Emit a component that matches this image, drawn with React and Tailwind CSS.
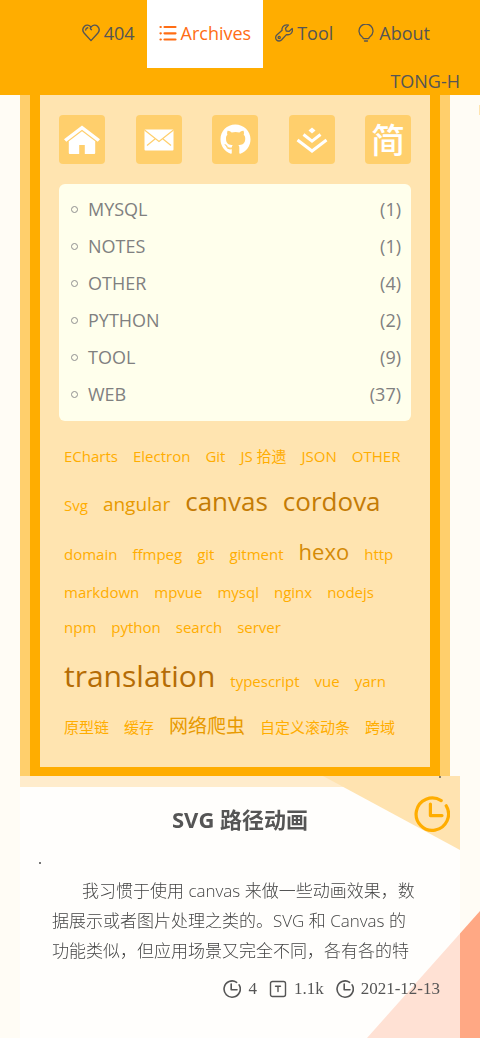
import React from "react";
import { FaGithub } from "react-icons/fa";

const line = {
  fill: "none",
  stroke: "currentColor",
  strokeLinecap: "round",
  strokeLinejoin: "round",
};

const HeartIcon = () => (
  <svg viewBox="0 0 18 18" className="size-[18px]" {...line} strokeWidth="1.4">
    <path d="M9 3.2C7.200.8 4.300.5 2.500 2.200.5 4.200.4 7 2.300 9.200L9 16.600l6.700-7.400c1.900-2.200 1.800-5-.2-7C13.700.5 10.800.8 9 3.200c-1 1-.7 1.900.4 2.500" />
    <path d="M3.700 6c.1-1.200.9-2 2-2.200" />
  </svg>
);

const ListIcon = () => (
  <svg viewBox="0 0 18 18" className="size-[18px]" {...line} strokeWidth="2.2">
    <path d="M5.500 3h11M5.500 9.300h11M5.500 15.500h11" />
    <path d="M1.500 3h.3M1.500 9.300h.3M1.500 15.500h.3" />
  </svg>
);

const WrenchIcon = () => (
  <svg viewBox="0 0 18 18" className="size-[18px]" {...line} strokeWidth="1.3">
    <path d="M13.400 1.100C10.800.2 7.800 1.600 7.100 4.300c-.2.800-.1 1.300 0 1.900L1.800 11c-1.500 1.400-1.500 3.700-.2 5 1.400 1.400 3.700 1.300 5.100-.2l4.700-5.200c2.900.6 5.400-1.100 6-3.700.2-.9.100-1.600-.2-2.400l-3.200 2.900-2.800-.4-.7-2.700z" />
    <circle cx="4.200" cy="13.500" r="1.100" />
  </svg>
);

const BulbIcon = () => (
  <svg viewBox="0 0 18 18" className="size-[18px]" {...line} strokeWidth="1.3">
    <path d="M6.200 14.600c0-.9-.7-1.500-1.500-2.100A7 7 0 1 1 13.300 12.500c-.8.6-1.500 1.200-1.500 2.100zM7.500 17h3" />
  </svg>
);

const ClockIcon = ({ className }) => (
  <svg viewBox="0 0 18 18" className={className} {...line} strokeWidth="1.6">
    <path d="M16.100 4.900A8.100 8.100 0 1 1 13.600 2.300" />
    <path d="M8.200 4v5.800h5.800" />
  </svg>
);

const WordsIcon = () => (
  <svg viewBox="0 0 18 18" className="size-[18px]" {...line} strokeWidth="1.4">
    <rect x="1.500" y="1.500" width="15" height="15" rx="2" />
    <path d="M6.500 6.300h5M9 6.300v5.200" />
  </svg>
);

const HomeIcon = () => (
  <svg viewBox="0 0 36 30" className="h-[30px] w-9" fill="currentColor">
    <path d="M18 .5 0 14.200l2.300 2.500L18 4.800l15.700 11.900 2.300-2.500z" />
    <path d="M18 6.200 4.800 16.200V28q0 1 1 1h9.400v-9h5.600v9h9.400q1 0 1-1V16.200z" />
  </svg>
);

const MailIcon = () => (
  <svg viewBox="0 0 30 22" className="h-[22px] w-[30px]">
    <rect x=".5" y=".5" width="29" height="21" rx="1" fill="currentColor" />
    <path d="M.5 1 15 12.500 29.500 1M3 16.500 11 10M27 16.500 19 10" fill="none" stroke="#ffcf6c" strokeWidth="1.2" />
  </svg>
);

const JuejinIcon = () => (
  <svg viewBox="0 0 32 26" className="h-[26px] w-8">
    <path d="M16 .5 19.500 3.500 16 6.500 12.500 3.500z" fill="currentColor" />
    <path d="M7.500 7.500 16 14.200 24.500 7.500M1.500 13 16 24l14.500-11" fill="none" stroke="currentColor" strokeWidth="3" />
  </svg>
);

const nav = [
  { label: "404", icon: <HeartIcon /> },
  { label: "Archives", icon: <ListIcon />, active: true },
  { label: "Tool", icon: <WrenchIcon /> },
  { label: "About", icon: <BulbIcon /> },
];

const socials = [
  { label: "Home", icon: <HomeIcon /> },
  { label: "Mail", icon: <MailIcon /> },
  { label: "GitHub", icon: <FaGithub className="size-[31px]" /> },
  { label: "Juejin", icon: <JuejinIcon /> },
  { label: "Jianshu", icon: <span className="text-[34px] leading-9 font-medium">简</span> },
];

const categories = [
  ["MYSQL", 1],
  ["NOTES", 1],
  ["OTHER", 4],
  ["PYTHON", 2],
  ["TOOL", 9],
  ["WEB", 37],
];

const sizes = {
  1: "text-[15px] leading-[35px] text-[#ffad00]",
  2: "text-[19px] leading-[40px] text-[#e89a00]",
  3: "text-[22px] leading-[47px] text-[#d48a06]",
  4: "text-[26px] leading-[54px] text-[#c47b05]",
  5: "text-[30px] leading-[61px] text-[#b56c05]",
};

const tags = [
  ["ECharts", 1], ["Electron", 1], ["Git", 1], ["JS 拾遗", 1], ["JSON", 1], ["OTHER", 1],
  ["Svg", 1], ["angular", 2], ["canvas", 4], ["cordova", 4],
  ["domain", 1], ["ffmpeg", 1], ["git", 1], ["gitment", 1], ["hexo", 3], ["http", 1],
  ["markdown", 1], ["mpvue", 1], ["mysql", 1], ["nginx", 1], ["nodejs", 1],
  ["npm", 1], ["python", 1], ["search", 1], ["server", 1],
  ["translation", 5], ["typescript", 1], ["vue", 1], ["yarn", 1],
  ["原型链", 1], ["缓存", 1], ["网络爬虫", 2], ["自定义滚动条", 1], ["跨域", 1],
];

function Header() {
  return (
    <header className="h-[95px] bg-[#ffad00] text-[18px] text-[#555]">
      <nav className="flex justify-end pr-[38px]">
        {nav.map((item) => (
          <a
            key={item.label}
            href="#"
            className={
              item.active
                ? "flex h-17 items-center gap-1 bg-white px-3 pb-0.5 text-[#ff6d14]"
                : "flex h-17 items-center gap-1 px-3 pb-0.5"
            }
          >
            {item.icon}
            {item.label}
          </a>
        ))}
      </nav>
      <div className="pr-5 text-right leading-[26px]">TONG-H</div>
    </header>
  );
}

function Sidebar() {
  return (
    <aside className="mr-[30px] ml-5 border-x-10 border-[#ffcf6c]">
      <div className="border-x-10 border-b-9 border-[#ffad00] bg-[#ffe4b0] px-[19px] pt-5 pb-[21px]">
        <div className="flex justify-between">
          {socials.map((s) => (
            <a
              key={s.label}
              href="#"
              aria-label={s.label}
              className="flex h-[49px] w-[46px] items-center justify-center rounded bg-[#ffcf6c] text-white"
            >
              {s.icon}
            </a>
          ))}
        </div>
        <ul className="mt-5 rounded-md bg-[#ffffec] pt-[7px] pr-2.5 pb-2 pl-3 text-[18px] text-[#808080]">
          {categories.map(([name, count]) => (
            <li key={name}>
              <a href="#" className="flex h-[37px] items-center">
                <span className="mr-2.5 size-[7px] rounded-full border border-[#909090]" />
                <span className="flex-1">{name}</span>
                <span>({count})</span>
              </a>
            </li>
          ))}
        </ul>
        <div className="mt-[18px] flex flex-wrap items-baseline gap-x-[15px] pl-[5px]">
          {tags.map(([name, size]) => (
            <a key={name} href="#" className={sizes[size]}>
              {name}
            </a>
          ))}
        </div>
      </div>
    </aside>
  );
}

function Post() {
  return (
    <article className="relative mx-5 flex-1 border-t-11 border-[#ffeccc] bg-white/65 pb-6">
      <svg
        viewBox="0 0 137 74"
        className="absolute -top-[11px] right-0 h-[74px] w-[137px]"
        aria-hidden="true"
      >
        <path d="M0 0h137v74z" fill="#ffe3b0" />
      </svg>
      <ClockIcon className="absolute top-[9px] right-2.5 size-9 text-[#ffad00]" />
      <span className="absolute -top-[11px] right-[19px] size-0.5 bg-[#8a8068]" />
      <span className="absolute top-[75px] left-[19px] size-0.5 bg-[#777]" />
      <h2 className="pt-4 text-center text-[22px] leading-[32px] font-bold text-[#555]">
        SVG 路径动画
      </h2>
      <p className="mt-[41px] h-[90px] overflow-hidden pr-10 pl-8 indent-[30px] text-[17px] leading-[30px] font-light text-[#444]">
        我习惯于使用 canvas 来做一些动画效果，数据展示或者图片处理之类的。SVG 和 Canvas 的功能类似，但应用场景又完全不同，各有各的特
      </p>
      <div className="mt-3 flex justify-end gap-3 pr-5 font-['Liberation_Serif',serif] text-[17px] leading-[22px] text-[#555]">
        <span className="flex items-center gap-[7px]">
          <ClockIcon className="size-[18px]" />4
        </span>
        <span className="flex items-center gap-[7px]">
          <WordsIcon />
          1.1k
        </span>
        <span className="flex items-center gap-[7px]">
          <ClockIcon className="size-[18px]" />
          <time>2021-12-13</time>
        </span>
      </div>
    </article>
  );
}

export default function App() {
  return (
    <div
      lang="zh-CN"
      className="relative isolate flex min-h-screen flex-col bg-[#fffcf5] font-['Open_Sans','Noto_Sans_CJK_SC',sans-serif]"
    >
      <svg
        viewBox="0 0 113 127"
        className="fixed right-0 bottom-0 -z-10 h-[127px] w-[113px]"
        aria-hidden="true"
      >
        <path d="M113 0v127H0z" fill="#ffa884" />
      </svg>
      <span className="absolute top-[105px] right-0 h-2.5 w-px bg-[#ffe4b0]" />
      <Header />
      <Sidebar />
      <Post />
    </div>
  );
}
